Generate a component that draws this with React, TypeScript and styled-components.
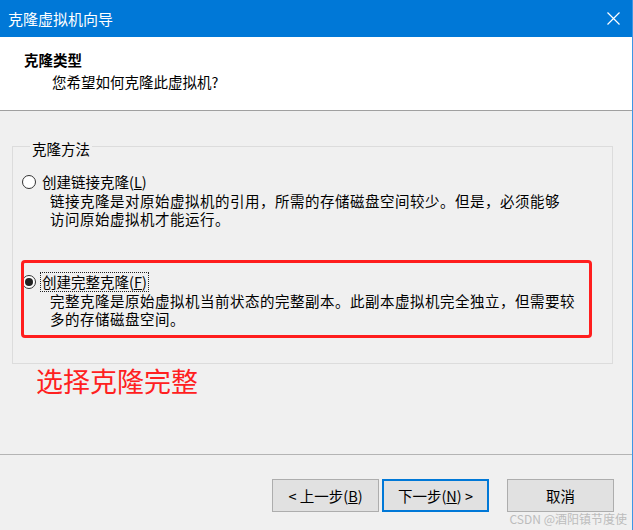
import React from "react";
import styled, { createGlobalStyle } from "styled-components";

const Global = createGlobalStyle`
  html, body { margin: 0; padding: 0; background: #f0f0f0; }
  body { font-family: "Noto Sans CJK SC", "Noto Sans", sans-serif; color: #000; }
  * { box-sizing: border-box; }
`;

const Window = styled.div`
  position: relative;
  width: 633px;
  height: 530px;
  display: flex;
  flex-direction: column;
  background: #f0f0f0;
  border-right: 1px solid #3d96e5;
  overflow: hidden;
`;

const TitleBar = styled.div`
  height: 37px;
  flex: none;
  background: #0078d7;
  display: flex;
  align-items: center;
  justify-content: space-between;
  padding: 0 12px 1px 8px;
  color: #fff;
  font-size: 15px;
`;

const Header = styled.div`
  height: 74px;
  flex: none;
  background: #fff;
  border-bottom: 1px solid #a0a0a0;
  padding: 12px 0 0 24px;
  line-height: 22px;
  font-size: 14.5px;
`;

const HeaderTitle = styled.div`
  font-weight: bold;
`;

const HeaderSub = styled.div`
  padding-left: 28px;
`;

const Content = styled.div`
  flex: 1;
  padding-top: 23px;
  display: flex;
  flex-direction: column;
`;

const Group = styled.fieldset`
  margin: 0 19px 0 12px;
  padding: 15px 0 36px 9px;
  border: 1px solid #dcdcdc;
  font-size: 14.5px;
`;

const Legend = styled.legend`
  margin-left: 8px;
  padding: 6px 2px 0;
  line-height: 18px;
`;

const Option = styled.div`
  position: relative;
  & + & { margin-top: 46px; }
`;

const OptionRow = styled.div`
  display: flex;
  align-items: center;
  height: 18px;
  margin-bottom: 1px;
`;

const RadioCircle = styled.span<{ $checked?: boolean }>`
  width: 14px;
  height: 14px;
  flex: none;
  border-radius: 50%;
  border: 1px solid #333;
  background: #fff;
  display: flex;
  align-items: center;
  justify-content: center;
  margin-right: 5px;
  &::after {
    content: "";
    display: ${(p) => (p.$checked ? "block" : "none")};
    width: 8px;
    height: 8px;
    border-radius: 50%;
    background: #222;
  }
`;

const OptionLabel = styled.span<{ $focused?: boolean }>`
  line-height: 18px;
  padding: 0 1px;
  outline: ${(p) => (p.$focused ? "1px dotted #222" : "none")};
`;

const Desc = styled.div`
  padding-left: 28px;
  line-height: 17.5px;
  letter-spacing: 0.5px;
`;

const Highlight = styled.div`
  position: absolute;
  left: -1px;
  top: -13px;
  width: 571px;
  height: 78px;
  border: 3px solid #ff1e1e;
  border-radius: 4px;
  pointer-events: none;
`;

const Note = styled.div`
  margin: 2px 0 0 36px;
  font-size: 27px;
  line-height: 30px;
  color: #ff2020;
`;

const Footer = styled.div`
  height: 76px;
  flex: none;
  border-top: 1px solid #b4b4b4;
  padding: 24px 18px 0 0;
  display: flex;
  justify-content: flex-end;
  align-items: flex-start;
`;

const Button = styled.button<{ $primary?: boolean; $gap?: number }>`
  width: 107px;
  height: 33px;
  margin-left: ${(p) => p.$gap ?? 0}px;
  background: #e1e1e1;
  border: ${(p) => (p.$primary ? "2px solid #0078d7" : "1px solid #adadad")};
  font-family: "Noto Sans CJK SC", "Noto Sans", sans-serif;
  font-size: 14.5px;
  color: #000;
  padding: 0;
  display: flex;
  align-items: center;
  justify-content: center;
`;

const Watermark = styled.div`
  position: absolute;
  right: 5px;
  bottom: 3px;
  font-size: 12px;
  line-height: 16px;
  color: #bcbcbc;
`;

const CloseIcon = () => (
  <svg width="13" height="13" viewBox="0 0 13 13">
    <path d="M0.5 0.5 L12.5 12.5 M12.5 0.5 L0.5 12.5" stroke="#fff" strokeWidth="1.2" fill="none" />
  </svg>
);

export default function App() {
  return (
    <>
      <Global />
      <Window>
        <TitleBar>
          <span>克隆虚拟机向导</span>
          <CloseIcon />
        </TitleBar>
        <Header>
          <HeaderTitle>克隆类型</HeaderTitle>
          <HeaderSub>您希望如何克隆此虚拟机?</HeaderSub>
        </Header>
        <Content>
          <Group>
            <Legend>克隆方法</Legend>
            <Option>
              <OptionRow>
                <RadioCircle />
                <OptionLabel>
                  创建链接克隆(<u>L</u>)
                </OptionLabel>
              </OptionRow>
              <Desc>
                链接克隆是对原始虚拟机的引用，所需的存储磁盘空间较少。但是，必须能够
                <br />
                访问原始虚拟机才能运行。
              </Desc>
            </Option>
            <Option>
              <OptionRow>
                <RadioCircle $checked />
                <OptionLabel $focused>
                  创建完整克隆(<u>F</u>)
                </OptionLabel>
              </OptionRow>
              <Desc>
                完整克隆是原始虚拟机当前状态的完整副本。此副本虚拟机完全独立，但需要较
                <br />
                多的存储磁盘空间。
              </Desc>
              <Highlight />
            </Option>
          </Group>
          <Note>选择克隆完整</Note>
        </Content>
        <Footer>
          <Button>
            &lt; 上一步(<u>B</u>)
          </Button>
          <Button $primary $gap={3}>
            下一步(<u>N</u>) &gt;
          </Button>
          <Button $gap={18}>取消</Button>
        </Footer>
        <Watermark>CSDN @酒阳镇节度使</Watermark>
      </Window>
    </>
  );
}
